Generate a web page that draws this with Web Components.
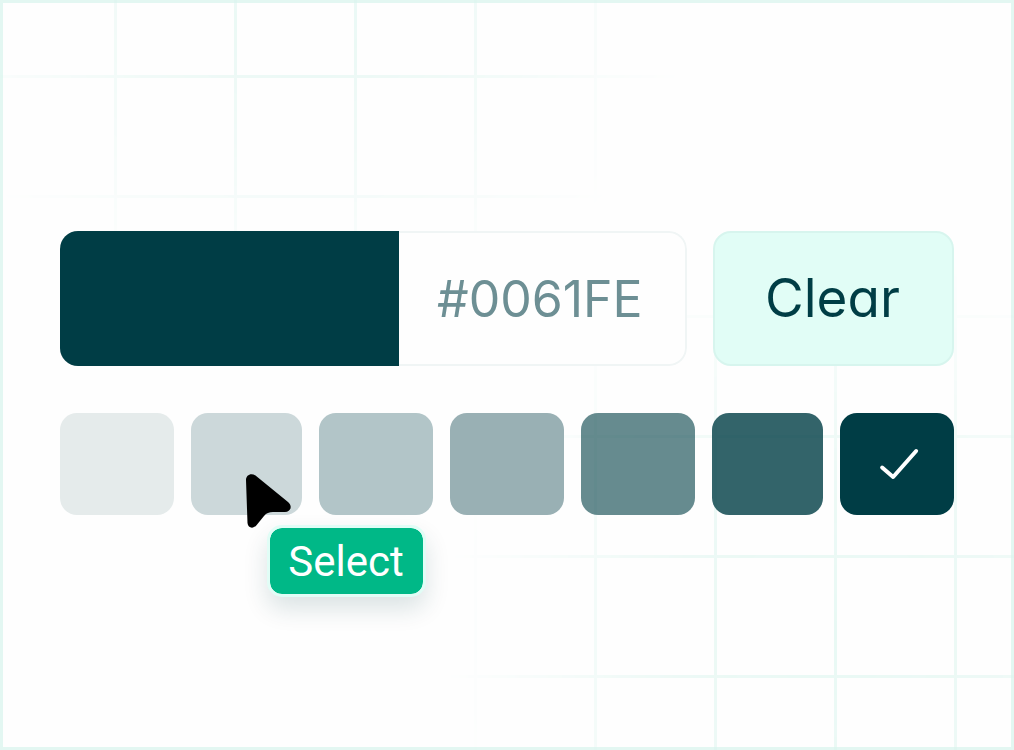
<!DOCTYPE html>
<html lang="en">
<head>
<meta charset="utf-8">
<meta name="viewport" content="width=device-width, initial-scale=1">
<title>Color picker</title>
<style>
  body { margin: 0; background: #fefefe; font-family: Inter, "Liberation Sans", sans-serif; color: #003d45; }
</style>
</head>
<body>
<grid-stage>
  <color-field value="#0061FE" color="#003d45"></color-field>
  <clear-button>Clear</clear-button>
  <color-palette>
    <pointer-tip>Select</pointer-tip>
  </color-palette>
</grid-stage>

<script>
function define(name, html, setup) {
  const template = document.createElement('template');
  template.innerHTML = html;
  customElements.define(name, class extends HTMLElement {
    constructor() {
      super();
      this.attachShadow({ mode: 'open' }).append(template.content.cloneNode(true));
    }
    connectedCallback() { if (setup) setup(this, this.shadowRoot); }
  });
}

define('grid-stage', `
  <style>
    :host {
      display: grid; box-sizing: border-box; min-height: 100vh; position: relative;
      border: 3px solid #e3f7f2; padding: 16px 57px 20px;
    }
    .lines {
      position: absolute; inset: -3px; pointer-events: none;
      background:
        repeating-linear-gradient(90deg, transparent 0 114px, #d9f4ed 114px 117px, transparent 117px 120px),
        repeating-linear-gradient(180deg, transparent 0 75px, #d9f4ed 75px 78px, transparent 78px 120px);
      -webkit-mask-image:
        radial-gradient(390px 320px at 30% 0, rgba(0,0,0,.6), rgba(0,0,0,.35) 45%, transparent),
        radial-gradient(390px 400px at 82% 84%, rgba(0,0,0,.6), rgba(0,0,0,.45) 40%, transparent);
      mask-image:
        radial-gradient(390px 320px at 30% 0, rgba(0,0,0,.6), rgba(0,0,0,.35) 45%, transparent),
        radial-gradient(390px 400px at 82% 84%, rgba(0,0,0,.6), rgba(0,0,0,.45) 40%, transparent);
    }
    main {
      position: relative; display: grid; align-content: center;
      grid-template-columns: 627fr 241fr; column-gap: 26px; row-gap: 47px;
    }
    ::slotted(color-palette) { grid-column: 1 / -1; }
  </style>
  <div class="lines"></div>
  <main><slot></slot></main>
`);

define('color-field', `
  <style>
    :host {
      display: grid; grid-template-columns: 339fr 288fr; box-sizing: border-box; height: 135px;
      overflow: hidden; border-radius: 18px; background: #fefefe;
    }
    .preview { background: var(--color); }
    input {
      width: 100%; min-width: 0; box-sizing: border-box; margin: 0; padding: 0 0 0 38px;
      border: 2px solid #f0f5f5; border-left: 0; border-radius: 0 18px 18px 0;
      background: none; color: #6d8f94; font: 400 50px/60px Inter, "Liberation Sans", sans-serif;
      outline: none;
    }
  </style>
  <div class="preview"></div>
  <input type="text" aria-label="Hex color" spellcheck="false">
`, (host, root) => {
  root.querySelector('input').value = host.getAttribute('value');
  host.style.setProperty('--color', host.getAttribute('color'));
});

define('clear-button', `
  <style>
    :host { display: block; height: 135px; }
    button {
      width: 100%; height: 100%; box-sizing: border-box; margin: 0; padding: 0 2px 2px 0;
      border: 2px solid #d7f5ee; border-radius: 18px; background: #e1fdf6; color: #003d45;
      font: 400 53px/60px Inter, "Liberation Sans", sans-serif;
      font-feature-settings: "cv11"; cursor: pointer;
    }
  </style>
  <button type="button"><slot></slot></button>
`);

define('color-palette', `
  <style>
    :host { display: block; }
    .row {
      display: grid; gap: 17px; height: 102px;
      grid-template-columns: 114fr 110fr 114fr 114fr 114fr 110fr 114fr;
    }
    .cell { position: relative; display: grid; }
    .cell:nth-child(2) { z-index: 1; }
    input {
      appearance: none; width: 100%; height: 100%; margin: 0; border-radius: 17px;
      background: var(--shade); cursor: pointer;
    }
    svg {
      display: none; position: absolute; inset: 0; width: 100%; height: 100%;
      fill: none; stroke: #fff; stroke-width: 4; stroke-linecap: round; stroke-linejoin: round;
      pointer-events: none;
    }
    input:checked + svg { display: block; }
    ::slotted(pointer-tip) { position: absolute; left: 54px; top: 61px; }
  </style>
  <div class="row" role="radiogroup" aria-label="Shades"></div>
`, (host, root) => {
  const row = root.querySelector('.row');
  const shades = [
    '#e5ebeb', '#ccd8da', '#b2c5c8', '#99b0b4',
    'rgb(0 61 69 / 60%)', 'rgb(0 61 69 / 80%)', '#003d45'
  ];
  row.innerHTML = shades.map((shade, i) => `
    <div class="cell">
      <input type="radio" name="shade" aria-label="Shade ${i + 1}" style="--shade: ${shade}" ${i === 6 ? 'checked' : ''}>
      <svg viewBox="0 0 114 102" aria-hidden="true"><path d="M42 54.500 53 64 76 38"/></svg>
      ${i === 1 ? '<slot></slot>' : ''}
    </div>`).join('');
});

define('pointer-tip', `
  <style>
    :host { display: grid; justify-items: start; pointer-events: none; }
    svg { display: block; width: 46px; height: 54px; }
    .tip {
      margin: -3px 0 0 22px; box-sizing: border-box; padding: 10px 19px 8px 18px;
      border: 3px solid #e1fdf6; border-radius: 15px; background: #00b887; background-clip: padding-box;
      box-shadow: 0 12px 24px rgb(0 61 69 / 14%);
      color: #fff; font: 400 42px/48px Roboto, "Liberation Sans", sans-serif; white-space: nowrap;
    }
  </style>
  <svg viewBox="0 0 46 54" aria-hidden="true">
    <path d="M1 6C1 1 6-1.500 10.500 1.500L43 28C48 32 45.500 38 40 38H28C24 38 21.500 39 19 42L12.500 50C9 55.500 3 54.500 2.500 49Z"/>
  </svg>
  <div class="tip"><slot></slot></div>
`);
</script>
</body>
</html>
